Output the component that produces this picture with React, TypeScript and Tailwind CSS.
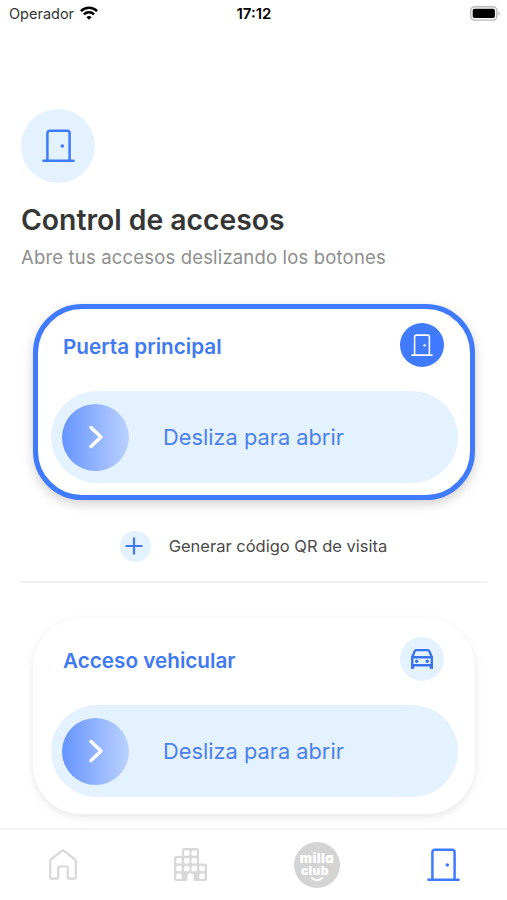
import clsx from 'clsx';

interface IconProps {
  className?: string;
  strokeWidth?: number;
}

interface AccessCardProps {
  title: string;
  icon: React.ReactNode;
  active?: boolean;
}

function DoorIcon({ className, strokeWidth = 2.5 }: IconProps) {
  return (
    <svg
      viewBox="0 0 33 33"
      fill="none"
      stroke="currentColor"
      strokeWidth={strokeWidth}
      strokeLinecap="round"
      className={className}
      aria-hidden
    >
      <path d="M1.4 31.7h30.2M5.4 31.7V4.2a2.5 2.5 0 0 1 2.5-2.5h17.2a2.5 2.5 0 0 1 2.5 2.5v27.5" />
      <circle cx="20.3" cy="17" r="1.8" fill="currentColor" stroke="none" />
    </svg>
  );
}

function CarIcon() {
  return (
    <svg viewBox="0 0 24 22" className="w-6 h-[22px]" fill="none" stroke="currentColor" strokeWidth="2.4" strokeLinejoin="round" aria-hidden>
      <path d="M2.2 9.3 4.7 3.1q.4-1 1.400-1h11.800q1 0 1.400 1l2.500 6.200" />
      <path d="M2.200 20.500V9.300h19.600v11.200M2.200 17.300h19.600" />
      <path d="M1 16.500h3.200v4.300H1ZM19.800 16.500H23v4.300h-3.200Z" fill="currentColor" stroke="none" />
      <circle cx="6.700" cy="13.300" r="1.700" fill="currentColor" stroke="none" />
      <circle cx="17.300" cy="13.300" r="1.700" fill="currentColor" stroke="none" />
    </svg>
  );
}

function WifiIcon() {
  return (
    <svg viewBox="0 0 18 14" className="w-[18px] h-3.5 mb-0.5" fill="none" stroke="#000" strokeWidth="2.5" aria-hidden>
      <path d="M.9 5.1a11.5 11.5 0 0 1 16.2 0" />
      <path d="M3.9 8.4a7.2 7.2 0 0 1 10.2 0" />
      <path d="M9 13.8 6.4 11.2a3.7 3.7 0 0 1 5.2 0Z" fill="#000" stroke="none" />
    </svg>
  );
}

function BatteryIcon() {
  return (
    <svg viewBox="0 0 31 15" className="w-[31px] h-[15px]" aria-hidden>
      <rect x=".7" y=".7" width="26.2" height="13.4" rx="4" fill="#fff" stroke="#b9b9b9" strokeWidth="1.4" />
      <rect x="2.7" y="2.7" width="22.2" height="9.4" rx="1.8" fill="#000" />
      <path d="M28.5 5.2c1.8.7 1.8 3.7 0 4.4Z" fill="#b9b9b9" />
    </svg>
  );
}

function HomeIcon() {
  return (
    <svg
      viewBox="0 0 28 31"
      className="w-7 h-[31px]"
      fill="none"
      stroke="#d8d8d8"
      strokeWidth="2.2"
      strokeLinejoin="round"
      aria-hidden
    >
      <path d="M1.2 12.3q0-1.200.9-1.900L13.100 1.800q.9-.7 1.800 0l11 8.600q.9.7.9 1.900v15.900q0 1.500-1.500 1.500h-5q-1.500 0-1.500-1.500v-9.600q0-1.100-1.100-1.100h-7.400q-1.100 0-1.100 1.100v9.600q0 1.500-1.500 1.500h-5q-1.500 0-1.500-1.500Z" />
    </svg>
  );
}

function BuildingIcon() {
  return (
    <svg viewBox="0 0 33 33" className="w-[33px] h-[33px]" aria-hidden>
      <path
        d="M2 8h6V2.5q0-2.5 2.5-2.5h12q2.5 0 2.5 2.5V15.5h5.5q2.5 0 2.5 2.5v12.5q0 2.5-2.5 2.5H2.5Q0 33 0 30.5V10q0-2 2-2Z"
        fill="#d8d8d8"
      />
      <g fill="#fff">
        <rect x="10" y="2.2" width="5.5" height="5.5" rx="1.5" />
        <rect x="17.5" y="2.2" width="5.5" height="5.5" rx="1.5" />
        <rect x="2.2" y="10" width="5.5" height="5.5" rx="1.5" />
        <rect x="10" y="10" width="5.5" height="5.5" rx="1.5" />
        <rect x="17.5" y="10" width="5.5" height="5.5" rx="1.5" />
        <rect x="2.2" y="17.7" width="5.5" height="5.5" rx="1.5" />
        <rect x="10" y="17.7" width="5.5" height="5.5" rx="1.5" />
        <rect x="17.5" y="17.7" width="5.5" height="5.5" rx="1.5" />
        <rect x="25.3" y="17.7" width="5.5" height="5.5" rx="1.5" />
        <rect x="2.2" y="25.4" width="5.5" height="5.5" rx="1.5" />
        <rect x="25.3" y="25.4" width="5.5" height="5.5" rx="1.5" />
        <path d="M13.4 33v-5.2q0-2.3 2.3-2.3h1.6q2.3 0 2.3 2.3V33Z" />
      </g>
    </svg>
  );
}

function MillaClubLogo() {
  return (
    <div className="size-[46px] rounded-full bg-[#d4d4d4] text-white font-black flex flex-col items-center pt-2.5 [font-feature-settings:'cv11']">
      <span className="text-[13px] leading-[13px] tracking-[0.4px]">milla</span>
      <span className="text-[12px] leading-[11px] tracking-[0.4px] mr-1">club</span>
      <svg
        viewBox="0 0 14 5"
        className="w-3.5 h-[5px] mt-px"
        fill="none"
        stroke="#fff"
        strokeWidth="1.8"
        strokeLinecap="round"
        aria-hidden
      >
        <path d="M2 1q5 4.2 10 0" />
      </svg>
    </div>
  );
}

function AccessCard({ title, icon, active }: AccessCardProps) {
  return (
    <section
      className={clsx(
        'ml-[33px] mr-8 h-[196px] rounded-[49px] border-[5px] bg-white',
        active
          ? 'border-[#407bff] shadow-[0_4px_12px_rgba(0,0,0,0.19)]'
          : 'border-white shadow-[0_3px_9px_rgba(0,0,0,0.1)]'
      )}
    >
      <div className="flex items-center justify-between pl-[25px] pr-[26px] pt-3.5">
        <h2 className="mt-1 text-[20.7px] leading-7 font-semibold text-[#4079f2]">{title}</h2>
        <div
          className={clsx(
            'flex items-center justify-center size-11 rounded-full',
            active ? 'bg-[#407bff] text-white' : 'bg-[#e4f2ff] text-[#3b73ef]'
          )}
        >
          {icon}
        </div>
      </div>

      <div className="mt-6 ml-[13px] mr-3 h-[92px] rounded-full bg-[#e4f2ff] flex items-center pl-[11px]">
        <div className="flex items-center justify-center size-[67px] rounded-full bg-linear-to-r from-[#6694ff] to-[#bcd1ff]">
          <svg
            viewBox="0 0 14 24"
            className="w-3.5 h-6"
            fill="none"
            stroke="#fff"
            strokeWidth="3.4"
            strokeLinecap="round"
            strokeLinejoin="round"
            aria-hidden
          >
            <path d="m2 2.5 10 9.5-10 9.5" />
          </svg>
        </div>
        <span className="ml-[34px] text-[21.8px] text-[#4c80ef]">Desliza para abrir</span>
      </div>
    </section>
  );
}

export default function App() {
  return (
    <div className="h-[900px] w-[507px] overflow-hidden flex flex-col bg-white font-['Inter',sans-serif]">
      <header className="grid grid-cols-3 items-center h-[27px] shrink-0 pl-[9px] pr-[6px] text-[14.5px]">
        <div className="flex items-center gap-1.5 text-[#333]">
          <span>Operador</span>
          <WifiIcon />
        </div>
        <span className="-ml-0.5 pt-px text-center text-[15px] font-semibold text-black">17:12</span>
        <div className="flex justify-end">
          <BatteryIcon />
        </div>
      </header>

      <main className="flex-1 min-h-0 overflow-hidden">
        <div className="px-[21px] pt-[82px]">
          <div className="flex items-center justify-center size-[74px] rounded-full bg-[#e4f2ff] text-[#407bff]">
            <DoorIcon className="size-[33px] mb-0.5" />
          </div>
          <h1 className="mt-[19px] text-[28.3px] leading-9 font-semibold text-[#363636]">Control de accesos</h1>
          <p className="mt-[7px] text-[18.5px] leading-6 tracking-[0.17px] text-[#8e8e8e]">
            Abre tus accesos deslizando los botones
          </p>
        </div>

        <div className="mt-[35px]">
          <AccessCard
            title="Puerta principal"
            icon={<DoorIcon className="size-[22px]" strokeWidth={2.3} />}
            active
          />
        </div>

        <div className="mt-[31px] flex items-center justify-center h-[31px]">
          <div className="size-[31px] rounded-full bg-[#e4f2ff] flex items-center justify-center">
            <svg viewBox="0 0 18 18" className="size-[18px] mr-0.5 mb-0.5" stroke="#4079f2" strokeWidth="2.2" aria-hidden>
              <path d="M9 .5v17M.5 9h17" />
            </svg>
          </div>
          <span className="ml-[18px] text-[16.5px] text-[#4a4a4a]">Generar código QR de visita</span>
        </div>
        <div className="mt-[19px] ml-[21px] mr-5 h-0.5 bg-[#f0f0f0]" />

        <div className="mt-[35px]">
          <AccessCard title="Acceso vehicular" icon={<CarIcon />} />
        </div>
      </main>

      <nav className="h-[72px] shrink-0 border-t-2 border-[#f5f5f5] bg-white grid grid-cols-4 place-items-center pb-px">
        <HomeIcon />
        <BuildingIcon />
        <MillaClubLogo />
        <DoorIcon className="size-[33px] text-[#407bff]" />
      </nav>
    </div>
  );
}
